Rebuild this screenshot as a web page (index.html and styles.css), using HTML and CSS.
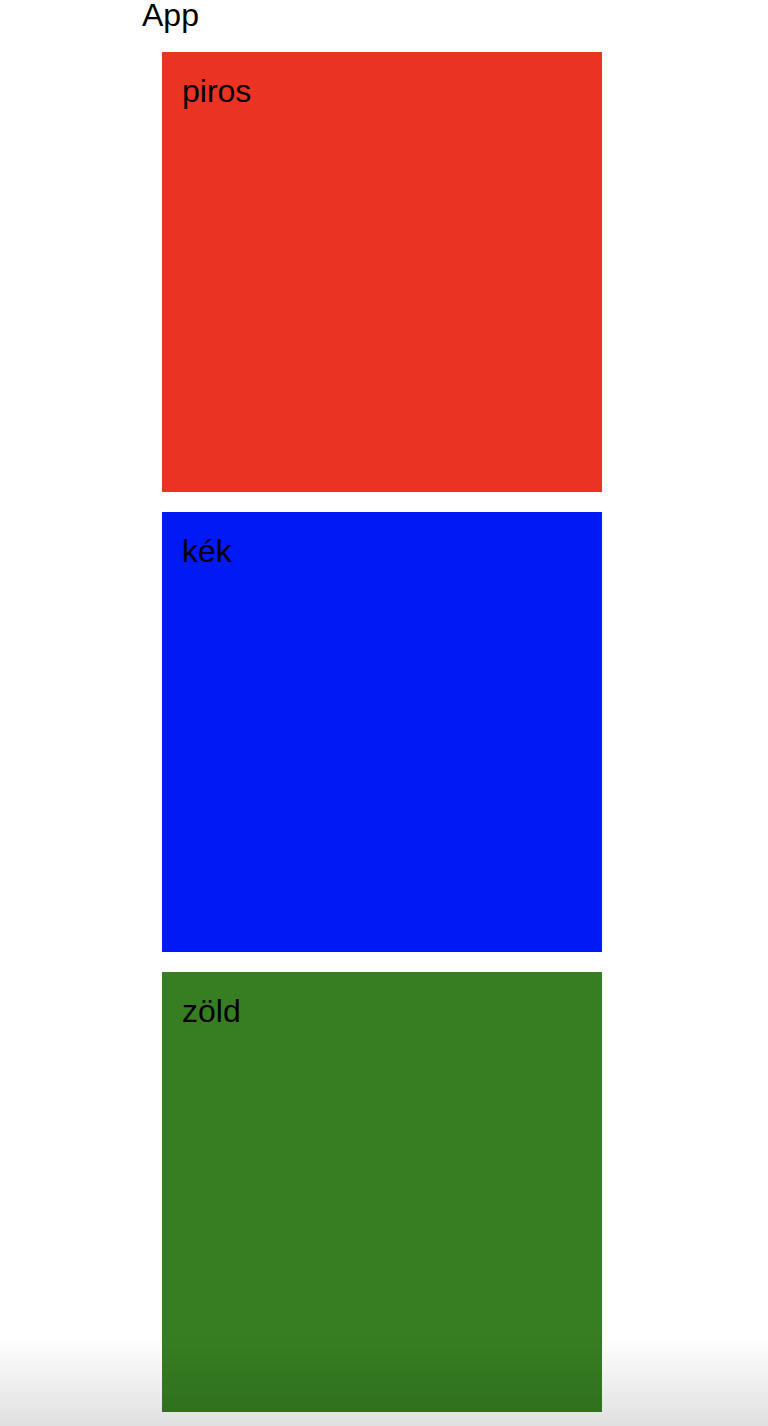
FILE: index.html
```html
<!DOCTYPE html>
<html lang="hu">
<head>
  <meta charset="UTF-8">
  <title>App</title>
  <link rel="stylesheet" href="styles.css">
</head>
<body>
  <div class="app">
    <div class="app-title">App</div>
    <div class="box piros">piros</div>
    <div class="box kek">kék</div>
    <div class="box zold">zöld</div>
  </div>
  <div class="shade"></div>
</body>
</html>
```

FILE: styles.css
```css
body {
  margin: 0;
  font-family: "Liberation Sans", Arial, sans-serif;
  background-color: #fff;
  color: #000;
}

.app {
  padding-left: 142px;
}

.app-title {
  font-size: 32px;
  line-height: 30px;
  margin-bottom: 22px;
}

.box {
  width: 440px;
  height: 440px;
  box-sizing: border-box;
  margin: 0 0 20px 20px;
  padding: 21px 20px;
  font-size: 32px;
  line-height: 36px;
}

.piros {
  background-color: #ea3323;
}

.kek {
  background-color: #0019f5;
}

.zold {
  background-color: #377e22;
}

.shade {
  position: fixed;
  left: 0;
  right: 0;
  bottom: 0;
  height: 90px;
  background: linear-gradient(to bottom, rgba(0,0,0,0), rgba(0,0,0,0.12));
  pointer-events: none;
}
```
